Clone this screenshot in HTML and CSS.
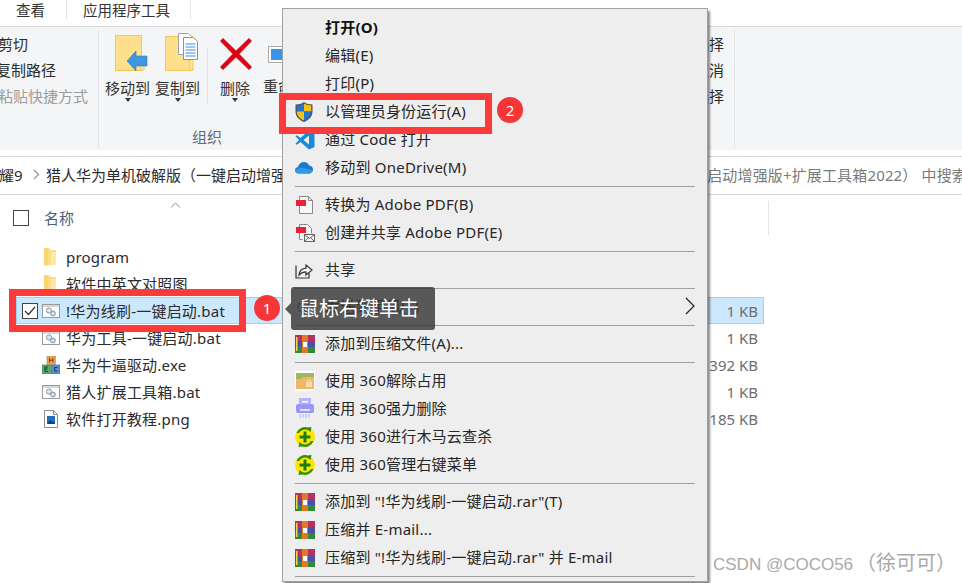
FILE: index.html
```html
<!DOCTYPE html>
<html lang="zh-CN">
<head>
<meta charset="utf-8">
<title>资源管理器右键菜单</title>
<link rel="stylesheet" href="styles.css">
</head>
<body>
<svg class="defs" aria-hidden="true">
  <defs>
    <symbol id="i-bat" viewBox="0 0 18 14">
      <rect x=".5" y=".5" width="17" height="13" fill="#fff" stroke="#9a9a9a"/>
      <rect x="1" y="1" width="16" height="2" fill="#d8d8d8"/>
      <circle cx="7" cy="6.5" r="2.6" fill="#dfe6ee" stroke="#8c97a3"/>
      <circle cx="11" cy="9.5" r="2.4" fill="#cfe0f2" stroke="#7f95ad"/>
    </symbol>
    <symbol id="i-folder" viewBox="0 0 13 18">
      <path d="M1 0h5l2 2h5v15H1z" fill="#fcdc84"/>
      <path d="M1 0h4v18H1z" fill="#f5ce62" opacity=".45"/>
      <path d="M8 4h5v13H8z" fill="#ffe9a8"/>
    </symbol>
    <symbol id="i-rar" viewBox="0 0 20 20">
      <rect x="0" y="1" width="20" height="6" fill="#b8305f"/>
      <rect x="0" y="7" width="20" height="6" fill="#4b4fa8"/>
      <rect x="0" y="13" width="20" height="6" fill="#2f8a3c"/>
      <rect x="7" y="1" width="6" height="18" fill="#e07a28"/>
      <rect x="8" y="8" width="4" height="5" fill="#fff"/>
      <rect x="1" y="3" width="1.5" height="14" fill="#f3d54a"/>
    </symbol>
    <symbol id="i-pdf" viewBox="0 0 20 20">
      <path d="M4.500 1.500h9l4 4v13h-13z" fill="#f8f8f8" stroke="#888"/>
      <path d="M13.500 1.500v4h4" fill="none" stroke="#888"/>
      <rect x="1" y="5" width="10" height="6" fill="#e8243a"/>
    </symbol>
    <symbol id="i-pdfmail" viewBox="0 0 20 20">
      <path d="M4.500 1.500h8l4 4v5M4.500 1.500v15h3" fill="#f8f8f8" stroke="#888"/>
      <rect x="1" y="4" width="10" height="6" fill="#e8243a"/>
      <rect x="9.500" y="11.500" width="10" height="7" fill="#f5f5f5" stroke="#666"/>
      <path d="M9.500 11.500l5 4 5-4M9.500 18.500l4-4M19.500 18.500l-4-4" fill="none" stroke="#666"/>
    </symbol>
    <symbol id="i-360" viewBox="0 0 20 20">
      <circle cx="10" cy="10" r="10" fill="#ffe600"/>
      <path d="M1.500 6A9.500 9.500 0 0 1 13 .5l3.500-.5-1 5-1.800-1.500A7 7 0 0 0 4 6zM18.500 14A9.500 9.500 0 0 1 7 19.500L3.500 20l1-5 1.800 1.500A7 7 0 0 0 16 14z" fill="#2f8f14"/>
      <path d="M8.500 4.500h3v4h4v3h-4v4h-3v-4h-4v-3h4z" fill="#1d7d12"/>
    </symbol>
  </defs>
</svg>

<div class="window">
  <nav class="tabs">
    <span class="tab">查看</span>
    <span class="tab">应用程序工具</span>
  </nav>

  <section class="ribbon">
    <div class="group group-clip">
      <span class="clip-item">剪切</span>
      <span class="clip-item">复制路径</span>
      <span class="clip-item clip-off">粘贴快捷方式</span>
    </div>
    <div class="group group-org">
      <div class="big-row">
        <div class="big-btn btn-move">
          <svg class="big-icon" width="34" height="38" viewBox="0 0 34 38">
            <rect x=".5" y=".5" width="26" height="35" fill="#fedf8c" stroke="#f0c956"/>
            <path d="M26 23v12h3V23z" fill="#ffe9a8" stroke="#f0c956"/>
            <path d="M12 26l9-10v5h11v10H21v5z" fill="#3f96e2" stroke="#2f7fc7" stroke-width=".6"/>
          </svg>
          <span class="big-label">移动到</span>
          <span class="caret"></span>
        </div>
        <div class="big-btn btn-copy">
          <svg class="big-icon" width="34" height="38" viewBox="0 0 34 38">
            <rect x=".5" y="3.500" width="27" height="34" fill="#fedf8c" stroke="#f0c956"/>
            <path d="M25 25h3v12h-3z" fill="#ffe9a8" stroke="#f0c956"/>
            <path d="M13.500.5h10l3 3v18h-13z" fill="#fff" stroke="#9ba3ad"/>
            <path d="M18.500 4.500h10l4 4v18h-14z" fill="#fff" stroke="#8b929b"/>
            <path d="M20.500 11h10M20.500 14h10M20.500 17h10M20.500 20h10M20.500 23h10" stroke="#3f8be0"/>
          </svg>
          <span class="big-label">复制到</span>
          <span class="caret"></span>
        </div>
        <i class="inner-sep"></i>
        <div class="big-btn btn-del">
          <svg class="big-icon" width="32" height="32" viewBox="0 0 32 32">
            <path d="M3 0l13 12.500L29 0l3 3-12.500 13L32 29l-3 3-13-12.500L3 32l-3-3 12.500-13L0 3z" fill="#e40014" stroke="#a8a0a0" stroke-width=".5"/>
          </svg>
          <span class="big-label">删除</span>
          <span class="caret"></span>
        </div>
        <div class="big-btn btn-ren">
          <svg class="big-icon ren-icon" width="20" height="17" viewBox="0 0 20 17">
            <rect x=".5" y=".5" width="19" height="16" fill="#fff" stroke="#aaa"/>
            <rect x="3" y="3" width="17" height="11" fill="#3a95e6"/>
          </svg>
          <span class="big-label">重命名</span>
        </div>
      </div>
      <span class="group-title">组织</span>
    </div>
    <div class="group group-select">
      <span class="sel-item">全部选择</span>
      <span class="sel-item">全部取消</span>
      <span class="sel-item">反向选择</span>
    </div>
  </section>

  <div class="address">
    <span class="crumb-first">耀9</span>
    <svg class="crumb-sep" width="7" height="11" viewBox="0 0 7 11"><path d="M1 1l4.500 4.500L1 10" fill="none" stroke="#9a9a9a" stroke-width="1.400"/></svg>
    <span class="crumb">猎人华为单机破解版（一键启动增强版+扩展工具箱2022）</span>
    <div class="search"><span class="search-text">在 猎人华为单机破解版（一键启动增强版+扩展工具箱2022） 中搜索</span></div>
  </div>

  <main class="list">
    <header class="list-head">
      <span class="check-box"></span>
      <span class="head-name">名称</span>
      <svg class="sort" width="11" height="6" viewBox="0 0 11 6"><path d="M1 5.500l4.500-4.500 4.500 4.500" fill="none" stroke="#8a8a8a"/></svg>
      <i class="head-sep"></i>
    </header>
    <div class="row">
      <svg class="file-icon folder-icon" width="13" height="18"><use href="#i-folder"/></svg>
      <span class="file-name">program</span>
    </div>
    <div class="row">
      <svg class="file-icon folder-icon" width="13" height="18"><use href="#i-folder"/></svg>
      <span class="file-name">软件中英文对照图</span>
    </div>
    <div class="row row-on">
      <span class="row-check">
        <svg width="12" height="10" viewBox="0 0 12 10"><path d="M1 5l3.500 3.500L11 1" fill="none" stroke="#333" stroke-width="1.200"/></svg>
      </span>
      <svg class="file-icon" width="18" height="14"><use href="#i-bat"/></svg>
      <span class="file-name">!华为线刷-一键启动.bat</span>
      <span class="size">1 KB</span>
    </div>
    <div class="row">
      <svg class="file-icon" width="18" height="14"><use href="#i-bat"/></svg>
      <span class="file-name">华为工具-一键启动.bat</span>
      <span class="size">1 KB</span>
    </div>
    <div class="row">
      <svg class="file-icon" width="18" height="18" viewBox="0 0 18 18">
        <rect x="5" y="0" width="8.500" height="8.500" fill="#e9a35a" stroke="#c97f34" stroke-width=".6"/>
        <rect x=".3" y="9" width="8.200" height="8.700" fill="#5aa86a" stroke="#2f7f45" stroke-width=".6"/>
        <rect x="9.300" y="9" width="8.400" height="8.700" fill="#5b8fcb" stroke="#2f68a8" stroke-width=".6"/>
        <path d="M7.500 2v4.500M11 2v4.500M7.500 4.200H11" stroke="#7a3a10" stroke-width="1"/>
        <path d="M6 15.500H3V11h3M3 13h2.500" fill="none" stroke="#0f4a22" stroke-width="1"/>
        <path d="M15.500 11.500h-2.800v3.500h2.800" fill="none" stroke="#103a70" stroke-width="1"/>
      </svg>
      <span class="file-name">华为牛逼驱动.exe</span>
      <span class="size">392 KB</span>
    </div>
    <div class="row">
      <svg class="file-icon" width="18" height="14"><use href="#i-bat"/></svg>
      <span class="file-name">猎人扩展工具箱.bat</span>
      <span class="size">1 KB</span>
    </div>
    <div class="row">
      <svg class="file-icon" width="18" height="18" viewBox="0 0 18 18">
        <path d="M2.500.5h9l4 4v13h-13z" fill="#fff" stroke="#8d8d8d"/>
        <path d="M11.500.5v4h4" fill="none" stroke="#8d8d8d"/>
        <rect x="5" y="6" width="8" height="8" fill="#1f6fc0"/>
        <path d="M5 14l3-4 2 2 1-1 2 3z" fill="#0e3f7e"/>
      </svg>
      <span class="file-name">软件打开教程.png</span>
      <span class="size">185 KB</span>
    </div>
  </main>
</div>

<div class="menu">
  <div class="mi mi-bold"><span class="mi-icon"></span>打开(O)</div>
  <div class="mi"><span class="mi-icon"></span>编辑(E)</div>
  <div class="mi"><span class="mi-icon"></span>打印(P)</div>
  <div class="mi"><span class="mi-icon">
    <svg width="18" height="20" viewBox="0 0 18 20">
      <path d="M9 0c2.500 1.800 5.500 2.500 8.500 2.500v7c0 5-3.500 8.500-8.500 10.500C4 18 .5 14.500.5 9.500v-7C3.500 2.500 6.500 1.800 9 0z" fill="#555"/>
      <path d="M9 1.500v8H1.800V3.500C4.500 3.400 7 2.800 9 1.500z" fill="#1f77d0"/>
      <path d="M9 1.500c2 1.300 4.500 1.900 7.200 2v6H9z" fill="#f5c21a"/>
      <path d="M1.800 9.500H9v9c-4-1.800-7-4.800-7.200-9z" fill="#f5c21a"/>
      <path d="M9 9.500h7.200c-.2 4.200-3.200 7.200-7.200 9z" fill="#1f77d0"/>
    </svg></span>以管理员身份运行(A)</div>
  <div class="mi"><span class="mi-icon">
    <svg width="20" height="20" viewBox="0 0 20 20">
      <path d="M14 .5l5.500 2.600v13.800L14 19.500 5.500 12 2 14.700.5 13.800 4 10 .5 6.200 2 5.300 5.500 8zM14 5.500L8.500 10l5.500 4.500z" fill="#1a8ad6"/>
    </svg></span>通过 Code 打开</div>
  <div class="mi"><span class="mi-icon">
    <svg width="18" height="12" viewBox="0 0 18 12">
      <path d="M4 11.500C1.500 11.500 0 10 0 8.200 0 6.600 1.200 5.300 3 5 3.600 2 6 0 9 0c2.500 0 4.300 1.300 5 3.500 2.300 0 4 1.800 4 4s-1.700 4-4 4z" fill="#1d78d0"/>
      <path d="M4 11.500C1.500 11.500 0 10 0 8.200c2-1.700 5-3 9-2.200 3 .5 6 2.500 9 2-.5 2-2 3.500-4 3.500z" fill="#2b9be8"/>
    </svg></span>移动到 OneDrive(M)</div>
  <hr class="msep">
  <div class="mi"><span class="mi-icon"><svg width="20" height="20"><use href="#i-pdf"/></svg></span>转换为 Adobe PDF(B)</div>
  <div class="mi"><span class="mi-icon"><svg width="20" height="20"><use href="#i-pdfmail"/></svg></span>创建并共享 Adobe PDF(E)</div>
  <hr class="msep">
  <div class="mi"><span class="mi-icon">
    <svg width="18" height="18" viewBox="0 0 18 18">
      <path d="M1 4.500v12.500h13v-5" fill="none" stroke="#333" stroke-width="1.200"/>
      <path d="M4 14c.5-4 3-6.500 7-6.800V4l6 5-6 5v-3.200c-3 0-5 1-7 3.200z" fill="#fff" stroke="#333" stroke-width="1.200"/>
    </svg></span>共享</div>
  <hr class="msep">
  <div class="mi"><span class="mi-icon">
    <svg width="16" height="16" viewBox="0 0 16 16"><circle cx="8" cy="8" r="5" fill="none" stroke="#555" stroke-width="2" stroke-dasharray="2 1.500"/></svg></span>发送到手机(T)<svg class="mi-arrow" width="10" height="18" viewBox="0 0 10 18"><path d="M1 1l8 8-8 8" fill="none" stroke="#222" stroke-width="1.200"/></svg></div>
  <hr class="msep">
  <div class="mi"><span class="mi-icon"><svg width="20" height="20"><use href="#i-rar"/></svg></span>添加到压缩文件(A)...</div>
  <hr class="msep">
  <div class="mi"><span class="mi-icon">
    <svg width="20" height="20" viewBox="0 0 20 20">
      <rect width="20" height="20" fill="#fff"/>
      <path d="M1 2h18v16H1z" fill="#f5b566"/>
      <path d="M1 2h18v4H8L6 8H1z" fill="#9db860"/>
      <rect x="11" y="11" width="6" height="5" fill="#fde0ac"/>
      <path d="M12.500 11V9h3v2" fill="none" stroke="#fde0ac"/>
    </svg></span>使用 360解除占用</div>
  <div class="mi"><span class="mi-icon">
    <svg width="20" height="21" viewBox="0 0 20 21">
      <path d="M4 0h12v8H4z" fill="#b7b1fb"/>
      <rect x="1" y="6" width="18" height="9" rx="2" fill="#9b95f5"/>
      <rect x="7" y="3" width="6" height="1.500" fill="#fff"/>
      <rect x="5" y="11" width="10" height="2" fill="#d9e3ff"/>
      <path d="M5 16v4M8 16v4M11 16v4M14 16v4" stroke="#b9c9fb" stroke-width="1.500"/>
    </svg></span>使用 360强力删除</div>
  <div class="mi"><span class="mi-icon"><svg width="20" height="20"><use href="#i-360"/></svg></span>使用 360进行木马云查杀</div>
  <div class="mi"><span class="mi-icon"><svg width="20" height="20"><use href="#i-360"/></svg></span>使用 360管理右键菜单</div>
  <hr class="msep">
  <div class="mi"><span class="mi-icon"><svg width="20" height="20"><use href="#i-rar"/></svg></span>添加到 "!华为线刷-一键启动.rar"(T)</div>
  <div class="mi"><span class="mi-icon"><svg width="20" height="20"><use href="#i-rar"/></svg></span>压缩并 E-mail...</div>
  <div class="mi"><span class="mi-icon"><svg width="20" height="20"><use href="#i-rar"/></svg></span>压缩到 "!华为线刷-一键启动.rar" 并 E-mail</div>
  <hr class="msep">
</div>

<div class="mark mark-file"></div>
<div class="mark mark-admin"></div>
<span class="badge badge-1">1</span>
<span class="badge badge-2">2</span>
<div class="tip">鼠标右键单击</div>
<div class="watermark">CSDN @COCO56<span class="watermark-cjk">（徐可可）</span></div>
</body>
</html>
```

FILE: styles.css
```css
* { box-sizing: border-box; }
html, body { margin: 0; height: 100%; }
body {
  position: relative;
  width: 962px;
  height: 583px;
  overflow: hidden;
  background: #fff;
  color: #2b2b2b;
  font: 15px/20px "Noto Sans", "Noto Sans CJK SC", sans-serif;
}
.defs { position: absolute; width: 0; height: 0; }
.window { display: flex; flex-direction: column; height: 583px; }

/* tabs */
.tabs { display: flex; height: 26px; }
.tab {
  padding: 0 16px;
  line-height: 21px;
  height: 19px;
  font-size: 14.5px;
  color: #333;
  border-right: 1px solid #e6e6e6;
}
.tab:first-child { width: 67px; }
.tab:last-child { width: 124px; }

/* ribbon */
.ribbon {
  display: flex;
  height: 124px;
  background: #f4f5f7;
  border-top: 1px solid #d9d9d9;
  padding-top: 3px;
}
.group { height: 118px; }
.group-clip {
  width: 99px;
  border-right: 1px solid #e2e3e5;
  display: flex;
  flex-direction: column;
  padding-top: 4px;
  gap: 6px;
}
.clip-item { height: 20px; white-space: nowrap; }
.clip-item:nth-child(1) { margin-left: -2px; }
.clip-item:nth-child(2) { margin-left: -4px; }
.clip-item.clip-off { margin-left: -2px; color: #9c9c9c; }
.group-org {
  width: 380px;
  display: flex;
  flex-direction: column;
}
.big-row { display: flex; height: 100px; align-items: flex-start; }
.big-btn {
  display: flex;
  flex-direction: column;
  align-items: center;
  height: 76px;
  flex: none;
}
.big-icon { height: 38px; flex: none; align-self: flex-start; margin-left: 10px; }
.big-label { line-height: 20px; margin-top: 5px; white-space: nowrap; color: #333; }
.caret {
  width: 0;
  height: 0;
  border: 3.500px solid transparent;
  border-top: 4px solid #333;
  border-bottom: 0;
  margin-top: 0;
}
.btn-move { width: 45px; margin: 5px 0 0 6px; }
.btn-copy { width: 45px; margin: 3px 0 0 5px; }
.btn-copy .big-label { margin-top: 7px; }
.inner-sep { width: 1px; height: 55px; background: #e0e1e3; margin: 19px 12px 0 7px; }
.btn-del { width: 30px; margin: 8px 0 0 0; }
.btn-del .big-icon { height: 32px; margin-left: 0; }
.btn-del .big-label { margin-top: 8px; }
.btn-ren { width: 45px; margin: 16px 0 0 13px; }
.btn-ren .big-icon { height: 17px; margin-left: 5px; }
.btn-ren .big-label { margin-top: 13px; }
.group-title {
  display: block;
  width: 216px;
  text-align: center;
  color: #5f6b78;
  line-height: 20px;
  margin-top: -3px;
}
.group-select {
  width: 256px;
  border-right: 1px solid #e2e3e5;
  display: flex;
  flex-direction: column;
  align-items: flex-end;
  padding: 4px 10px 0 0;
  gap: 6px;
}
.sel-item { height: 20px; }

/* address bar */
.address {
  display: flex;
  align-items: center;
  height: 39px;
  margin-top: 6px;
  padding-bottom: 2px;
  border-top: 1px solid #d9d9d9;
  border-bottom: 1px solid #d9d9d9;
  white-space: nowrap;
  overflow: hidden;
}
.crumb-first { flex: none; width: 26px; margin-left: -1px; }
.crumb-sep { flex: none; margin: 0 6px 0 8px; }
.crumb { flex: none; overflow: hidden; width: 561px; color: #2b2b2b; }
.search {
  flex: 1 1 0;
  min-width: 0;
  display: flex;
  justify-content: flex-end;
  overflow: hidden;
  color: #7a7a7a;
}
.search-text { flex: none; margin-right: -5px; letter-spacing: .15px; }

/* file list */
.list { display: flex; flex-direction: column; }
.list-head {
  display: flex;
  align-items: center;
  width: 769px;
  height: 48px;
  padding: 0 0 2px 13px;
}
.check-box { width: 16px; height: 16px; border: 1px solid #444; flex: none; }
.head-name { margin-left: 15px; color: #4c607a; }
.sort { margin: -26px 0 0 96px; flex: none; }
.head-sep { width: 1px; height: 34px; background: #e5e5e5; margin-left: auto; }
.row {
  display: flex;
  align-items: center;
  width: 748px;
  height: 27px;
  margin-left: 16px;
  padding-left: 26px;
}
.row-on {
  background: #cce8ff;
  box-shadow: inset 0 0 0 1px #99d1ff;
  padding-left: 6px;
}
.row-check {
  display: flex;
  align-items: center;
  justify-content: center;
  width: 16px;
  height: 16px;
  border: 1px solid #444;
  background: #fff;
  margin-right: 4px;
  flex: none;
}
.file-icon { flex: none; width: 18px; margin-right: 6px; }
.folder-icon { width: 13px; margin: 0 10px 0 1px; }
.file-name { white-space: nowrap; color: #2b2b2b; letter-spacing: .22px; }
.size { margin-left: auto; padding-right: 6px; color: #6d6d6d; white-space: nowrap; }

/* context menu */
.menu {
  position: absolute;
  left: 282px;
  top: 8px;
  width: 426px;
  padding: 5px 0 0;
  background: #eeeeee;
  border: 1px solid #a0a0a0;
  box-shadow: 2px 3px 2px rgba(0, 0, 0, .45);
  color: #262626;
}
.mi {
  display: flex;
  align-items: center;
  height: 28px;
  padding: 0 12px 2px;
  white-space: nowrap;
  letter-spacing: .22px;
}
.mi-bold { font-weight: 700; color: #111; }
.mi-icon {
  display: flex;
  align-items: center;
  justify-content: flex-start;
  width: 30px;
  height: 20px;
  margin-top: 1px;
  flex: none;
}
.mi-arrow { margin-left: auto; }
.msep { height: 1px; margin: 4px 12px; border: 0; background: #a0a0a0; }

/* annotations */
.mark { position: absolute; border: 7px solid #fd3a3a; }
.mark-file { left: 9px; top: 289px; width: 237px; height: 43px; }
.mark-admin { left: 279px; top: 93px; width: 213px; height: 41px; }
.badge {
  position: absolute;
  width: 26px;
  height: 26px;
  border-radius: 50%;
  background: #f63636;
  color: #fff;
  text-align: center;
  line-height: 26px;
  font-size: 15px;
}
.badge-1 { left: 254px; top: 295px; }
.badge-2 { left: 497px; top: 97px; }
.tip {
  position: absolute;
  left: 291px;
  top: 287px;
  width: 144px;
  height: 43px;
  padding-left: 8px;
  border-radius: 3px;
  background: rgba(55, 55, 55, .82);
  color: #fff;
  font-size: 20px;
  line-height: 43px;
  white-space: nowrap;
}
.tip::before {
  content: "";
  position: absolute;
  left: -6px;
  top: 16px;
  border: 6px solid transparent;
  border-left: 0;
  border-right-color: rgba(55, 55, 55, .82);
}
.watermark {
  position: absolute;
  left: 713px;
  top: 552px;
  color: #a9a9a9;
  font: 17px/22px "Liberation Sans", "Noto Sans CJK SC", sans-serif;
  white-space: nowrap;
}
.watermark-cjk { font-size: 20px; margin-left: 3px; }
```
